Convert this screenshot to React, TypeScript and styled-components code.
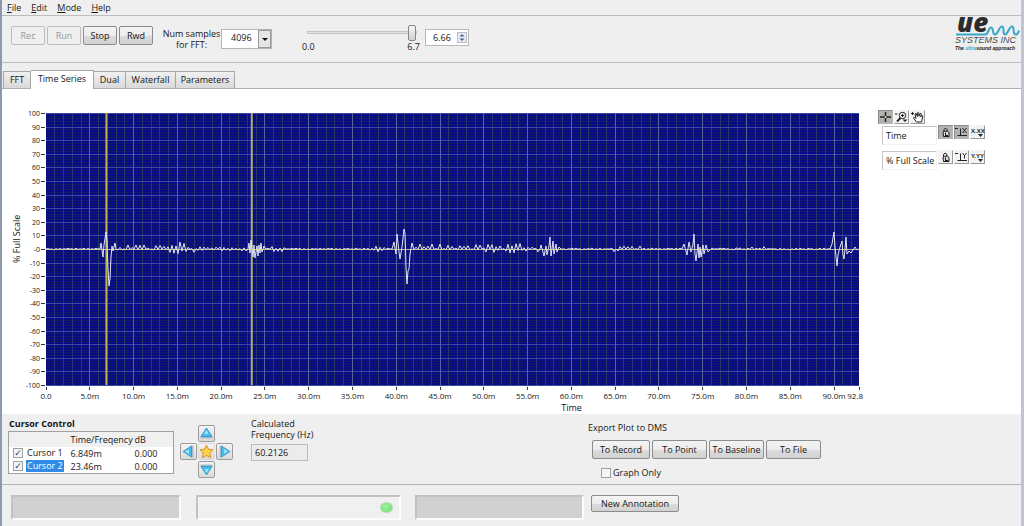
import React, { useState } from "react";
import styled, { createGlobalStyle, css } from "styled-components";

const GlobalStyle = createGlobalStyle`
  *, *::before, *::after { box-sizing: border-box; }
  body {
    margin: 0;
    background: #efefef;
    color: #161616;
    font-family: "Open Sans", "Noto Sans", sans-serif;
    font-size: 9px;
    line-height: 12px;
  }
  button, input, select { font: inherit; color: inherit; margin: 0; }
`;

/* ---------- shared parts ---------- */

const Window = styled.div`
  display: flex;
  flex-direction: column;
  min-height: 100vh;
  background: #efefef;
  border-left: 2px solid #8d9aa8;
  border-right: 3px solid #bcc6d2;
`;

const PushButton = styled.button<{ $width: number; $height?: number }>`
  width: ${(p) => p.$width}px;
  height: ${(p) => p.$height ?? 19}px;
  padding: 0;
  border: 1px solid #8c8c8c;
  border-radius: 2px;
  background: linear-gradient(#f4f4f4, #ececec 50%, #dcdcdc 51%, #d2d2d2);
  line-height: 14px;
  white-space: nowrap;
  &:disabled {
    color: #989898;
    border-color: #bdbdbd;
    background: #efefef;
  }
`;

/* ---------- menu and toolbar ---------- */

const MenuBar = styled.nav`
  display: flex;
  gap: 10px;
  height: 16px;
  padding: 0 5px;
  border-bottom: 1px solid #bdbdbd;
`;

const MenuItem = styled.button`
  padding: 0;
  border: 0;
  background: none;
  line-height: 14px;
`;

const Toolbar = styled.header`
  display: flex;
  align-items: flex-start;
  height: 47px;
  padding: 10px 0 0 9px;
  border-bottom: 1px solid #bdbdbd;
`;

const ButtonRow = styled.div<{ $gap: number }>`
  display: flex;
  gap: ${(p) => p.$gap}px;
`;

const SampleLabel = styled.label`
  display: flex;
  flex-direction: column;
  align-items: center;
  width: 55px;
  margin: 2px 2px 0 11px;
  line-height: 11px;
  white-space: nowrap;
`;

const SelectFrame = styled.div`
  position: relative;
  display: flex;
  width: 51px;
  height: 20px;
  margin-top: 3px;
  border: 1px solid #b4b4b4;
  background: #fff;
`;

const SampleSelect = styled.select`
  flex: 1;
  appearance: none;
  border: 0;
  padding: 0 0 2px 9px;
  background: none;
`;

const SelectArrow = styled.svg`
  position: absolute;
  top: 0;
  right: 0;
  pointer-events: none;
`;

const SliderGroup = styled.div`
  display: flex;
  flex-direction: column;
  width: 118px;
  margin: -3px 0 0 30px;
`;

const Slider = styled.input`
  appearance: none;
  width: 110px;
  height: 18px;
  margin: 0 0 0 5px;
  background: transparent;
  &::-webkit-slider-runnable-track {
    height: 3px;
    border: 1px solid #c4c4c4;
    background: #e2e2e2;
  }
  &::-webkit-slider-thumb {
    appearance: none;
    width: 8px;
    height: 16px;
    margin-top: -7px;
    border: 1px solid #858585;
    border-radius: 2px;
    background: linear-gradient(#f6f6f6, #cfcfcf);
  }
`;

const SliderScale = styled.div`
  display: flex;
  justify-content: space-between;
`;

const NumberFrame = styled.div`
  display: flex;
  align-items: center;
  width: 44px;
  height: 17px;
  margin: 3px 0 0 5px;
  border: 1px solid #b8b8b8;
  background: #fff;
`;

const NumberInput = styled.input`
  width: 31px;
  padding: 0 0 0 7px;
  border: 0;
  background: none;
  line-height: 14px;
`;

const Logo = styled.svg`
  margin: -10px 0 0 auto;
  overflow: visible;
`;

/* ---------- tabs ---------- */

const TabStrip = styled.div`
  display: flex;
  align-items: flex-end;
  height: 26px;
  padding-left: 1px;
  border-bottom: 1px solid #b0b0b0;
`;

const Tab = styled.button<{ $width: number; $active: boolean }>`
  width: ${(p) => p.$width}px;
  height: 17px;
  padding: 0;
  border: 1px solid #a6a6a6;
  border-width: 1px 1px 0 0;
  background: linear-gradient(#f0f0f0, #d9d9d9);
  line-height: 14px;
  &:first-child { border-left-width: 1px; }
  ${(p) =>
    p.$active &&
    css`
      height: 19px;
      margin-bottom: -1px;
      padding-bottom: 3px;
      background: #fff;
    `}
`;

/* ---------- graph page ---------- */

const GraphPage = styled.main`
  display: flex;
  height: 325px;
  padding: 24px 33px 0 9px;
  background: #fff;
`;

const AxisTitle = styled.div`
  width: 12px;
  height: 272px;
  margin-right: 23px;
  padding-top: 20px;
  writing-mode: vertical-rl;
  transform: rotate(180deg);
  line-height: 12px;
  text-align: center;
`;

const Plot = styled.figure`
  flex: 1;
  min-width: 0;
  margin: 0;
`;

const PlotSvg = styled.svg`
  display: block;
  width: 100%;
  height: 272px;
  overflow: visible;
  font-size: 8px;
  fill: #161616;
`;

const TimeTitle = styled.figcaption`
  margin-top: 17px;
  padding-left: 238px;
  text-align: center;
`;

const Legend = styled.aside`
  display: flex;
  flex-direction: column;
  width: 110px;
  margin: -3px 0 0 19px;
`;

const LegendRow = styled.div`
  display: flex;
  gap: 1px;
  height: 19px;
  margin: 0 0 6px 4px;
`;

const PaletteRow = styled.div`
  display: flex;
  gap: 1px;
  height: 15px;
`;

const ScaleName = styled.input`
  width: 55px;
  height: 19px;
  margin-top: 1px;
  padding: 0 0 0 3px;
  border: 1px solid #d8d8d8;
  border-color: #c4c4c4 #f0f0f0 #f0f0f0 #c4c4c4;
  background: #fff;
`;

const IconButton = styled.button<{ $pressed?: boolean }>`
  width: 15px;
  height: 14px;
  padding: 0;
  border: 1px solid;
  border-color: ${(p) => (p.$pressed ? "#8a8a8a #b4b4b4 #b4b4b4 #8a8a8a" : "#f4f4f4 #989898 #989898 #f4f4f4")};
  background: ${(p) => (p.$pressed ? "#b2b2b2" : "#f2f2f2")};
  line-height: 0;
  svg { display: block; overflow: visible; }
`;

/* ---------- cursor and export panel ---------- */

const ControlPanel = styled.section`
  display: flex;
  align-items: flex-start;
  height: 71px;
  padding: 4px 6px 0;
  border-bottom: 1px solid #b4b4b4;
`;

const CursorGroup = styled.div`
  width: 166px;
`;

const GroupTitle = styled.h2`
  margin: 0 0 1px 1px;
  font-size: 9px;
  line-height: 12px;
`;

const CursorTable = styled.table`
  width: 100%;
  table-layout: fixed;
  border-collapse: collapse;
  border: 1px solid #a0a0a0;
  background: #fff;
  th, td {
    height: 13px;
    padding: 0;
    font-weight: normal;
    text-align: left;
    line-height: 13px;
    white-space: nowrap;
  }
  thead { background: #f0f0f0; }
  th { height: 15px; }
  th:first-child { width: 62px; }
  th:nth-child(2) { width: 64px; }
`;

const CursorLabel = styled.label<{ $selected: boolean }>`
  display: flex;
  align-items: center;
  gap: 3px;
  padding-left: 4px;
  span {
    padding: 0 1px;
    line-height: 12px;
    background: ${(p) => (p.$selected ? "#2f8be6" : "none")};
    color: ${(p) => (p.$selected ? "#fff" : "inherit")};
  }
`;

const CheckBox = styled.input`
  appearance: none;
  flex: none;
  width: 10px;
  height: 10px;
  border: 1px solid #a0a0a0;
  background: #f4f4f4;
  &:checked::after {
    content: "✓";
    display: block;
    color: #34466e;
    font: bold 9px/8px "DejaVu Sans", sans-serif;
    text-align: center;
  }
`;

const NavPad = styled.div`
  display: grid;
  grid-template-columns: repeat(3, 17px);
  grid-template-rows: repeat(3, 17px);
  gap: 1px;
  margin: 7px 0 0 6px;
`;

const NavButton = styled.button<{ $area: string; $flat?: boolean }>`
  grid-area: ${(p) => p.$area};
  padding: 0;
  border: 1px solid ${(p) => (p.$flat ? "#dcdcdc" : "#9c9c9c")};
  border-radius: 2px;
  background: linear-gradient(#f4f4f4, #dadada);
  svg { display: block; }
`;

const FrequencyGroup = styled.label`
  display: flex;
  flex-direction: column;
  width: 64px;
  margin: 0 0 0 18px;
  line-height: 11px;
  white-space: nowrap;
`;

const FrequencyInput = styled.input`
  width: 57px;
  height: 17px;
  margin-top: 4px;
  padding: 0 3px;
  border: 1px solid #bcbcbc;
  background: #ececec;
  line-height: 14px;
`;

const ExportGroup = styled.div`
  display: flex;
  flex-direction: column;
  margin: 4px 0 0 273px;
`;

const ExportTitle = styled.div`
  margin-bottom: 6px;
`;

const ExportButtons = styled.div`
  display: flex;
  gap: 2px;
  margin-left: 4px;
`;

const GraphOnly = styled.label`
  display: flex;
  align-items: center;
  gap: 2px;
  margin: 8px 0 0 13px;
`;

/* ---------- status row ---------- */

const StatusBar = styled.footer`
  display: flex;
  align-items: flex-start;
  padding: 10px 9px 6px;
`;

const StatusBox = styled.div<{ $width: number; $gap: number; $filled?: boolean }>`
  display: flex;
  align-items: center;
  justify-content: flex-end;
  width: ${(p) => p.$width}px;
  height: 25px;
  margin-right: ${(p) => p.$gap}px;
  padding-right: 6px;
  border: 2px solid;
  border-color: #c2c2c2 #fcfcfc #fcfcfc #c2c2c2;
  background: ${(p) => (p.$filled ? "#d0d0d0" : "#f0f0f0")};
`;

const Led = styled.i`
  width: 13px;
  height: 11px;
  border: 1px solid #b4dcb0;
  border-radius: 50%;
  background: radial-gradient(circle at 40% 35%, #9cf29a, #6edc70);
`;

/* ---------- signal ---------- */

const PLOT_WIDTH = 813;
const PLOT_HEIGHT = 272;
const TIME_SPAN = 92.85;

type Point = [number, number];

const bursts: Point[][] = [
  [[54, 0], [55, 6], [57, -8], [58, 4], [60, 17], [61, 8], [62, -20], [63, -37], [64, -30], [65, -8], [66, 3], [67, -2], [69, 6], [70, 0]],
  [[202, 0], [203, 6], [204, -4], [205, 9], [207, -8], [208, 4], [209, -9], [211, 3], [212, -7], [213, 4], [214, -4], [215, 6], [216, -3], [218, 3], [220, 0]],
  [[346, 0], [348, 7], [350, -5], [351, 15], [353, -3], [354, -10], [356, 2], [358, 20], [359, 16], [360, -18], [361, -35], [362, -22], [363, -20], [364, -5], [366, 6], [368, -1]],
  [[494, 0], [495, 4], [497, -3], [498, -7], [500, 3], [501, -6], [503, 3], [504, 12], [505, -7], [507, 8], [508, -5], [510, 5], [511, -3], [513, 2], [515, 0]],
  [[636, 0], [638, 5], [641, -6], [643, 7], [645, -3], [647, 5], [648, 15], [649, -5], [650, -12], [652, 5], [653, -9], [654, 2], [655, -8], [657, 4], [658, -5], [660, 4], [662, -3], [665, 0]],
  [[784, 0], [786, 5], [788, 17], [789, 2], [791, -17], [792, -6], [794, 2], [796, 8], [797, -6], [798, -10], [799, 0], [800, 12], [801, -5], [803, -2], [805, -4], [807, -1], [809, 2], [811, -1], [813, 0]],
];

/* [from, to, upward reach, downward reach] of the low-level signal */
const quiet: [number, number, number, number][] = [
  [70, 100, 5, 1], [100, 124, 4, 1], [124, 144, 7, 5], [144, 165, 4, 4],
  [165, 202, 2, 2], [218, 245, 3, 3], [322, 340, 3, 4], [368, 440, 5, 1],
  [440, 475, 6, 4], [475, 494, 2, 3], [568, 576, 6, 4], [576, 596, 3, 1],
  [688, 708, 3, 1], [718, 728, 3, 5],
];

function buildTrace(): string {
  const points: Point[] = [];
  let seed = 11;
  const random = () => {
    seed = (seed * 16807) % 2147483647;
    return seed / 2147483647;
  };
  let up = true;
  for (let x = 0; x < PLOT_WIDTH; x += 2) {
    const value = random();
    up = !up;
    if (bursts.some((b) => x >= b[0][0] && x <= b[b.length - 1][0])) continue;
    const zone = quiet.find((q) => x >= q[0] && x < q[1]);
    const high = zone ? zone[2] : 1;
    const low = zone ? zone[3] : 1;
    points.push([x, up ? value * high : -value * low]);
  }
  return points
    .concat(...bursts)
    .sort((a, b) => a[0] - b[0])
    .map(([x, y]) => `${x},${PLOT_HEIGHT / 2 - y}`)
    .join(" ");
}

const trace = buildTrace();
const percentX = (ms: number) => `${(ms / TIME_SPAN) * 100}%`;
const levelY = (level: number) => Math.round(((100 - level) / 200) * PLOT_HEIGHT);

const minorTimes = Array.from({ length: 92 }, (_, i) => i + 1);
const majorTimes = Array.from({ length: 19 }, (_, i) => i * 5);
const minorLevels = Array.from({ length: 99 }, (_, i) => 98 - i * 2);
const majorLevels = Array.from({ length: 21 }, (_, i) => 100 - i * 10);

function levelText(level: number) {
  return level === 0 ? "-0" : String(level);
}

function TimeSeriesPlot() {
  return (
    <PlotSvg role="img" aria-label="Full scale level over time">
      <rect width="100%" height={PLOT_HEIGHT} fill="#09098a" />
      <g shapeRendering="crispEdges">
        {minorLevels.map((v) => (
          <line key={v} x1="0" x2="100%" y1={levelY(v)} y2={levelY(v)} stroke="#111c60" />
        ))}
        {minorTimes.map((t) => (
          <line key={t} x1={percentX(t)} x2={percentX(t)} y1="0" y2={PLOT_HEIGHT} stroke="#24386c" />
        ))}
        {majorLevels.map((v) => (
          <line key={v} x1="0" x2="100%" y1={levelY(v)} y2={levelY(v)} stroke="#3c4a9c" />
        ))}
        {majorTimes.slice(1).map((t) => (
          <line key={t} x1={percentX(t)} x2={percentX(t)} y1="0" y2={PLOT_HEIGHT} stroke="#53649c" />
        ))}
      </g>
      <line x1={percentX(6.9)} x2={percentX(6.9)} y1="0" y2={PLOT_HEIGHT} stroke="#b4b840" strokeWidth="2" />
      <line x1={percentX(23.5)} x2={percentX(23.5)} y1="0" y2={PLOT_HEIGHT} stroke="#a9b07c" strokeWidth="2" />
      <svg width="100%" height={PLOT_HEIGHT} viewBox={`0 0 ${PLOT_WIDTH} ${PLOT_HEIGHT}`} preserveAspectRatio="none">
        <polyline points={trace} fill="none" stroke="#e2e4fa" vectorEffect="non-scaling-stroke" />
      </svg>
      <line x1="0" x2="100%" y1="136.5" y2="136.5" stroke="#e0e090" strokeOpacity="0.8" />
      {majorLevels.map((v) => (
        <g key={v}>
          <line x1="-5" x2="-1" y1={levelY(v)} y2={levelY(v)} stroke="#333" shapeRendering="crispEdges" />
          <text x="-6" y={levelY(v) + 3} textAnchor="end" fontSize="7">{levelText(v)}</text>
        </g>
      ))}
      {majorTimes.map((t) => (
        <g key={t}>
          <line x1={percentX(t)} x2={percentX(t)} y1="274" y2="277" stroke="#333" shapeRendering="crispEdges" />
          <text x={percentX(t)} y="286" textAnchor="middle">{t === 0 ? "0.0" : `${t}.0m`}</text>
        </g>
      ))}
      <line x1="100%" x2="100%" y1="274" y2="277" stroke="#333" shapeRendering="crispEdges" />
      <text x="100%" dx="4" y="286" textAnchor="end">92.8</text>
    </PlotSvg>
  );
}

/* ---------- icons ---------- */

const CrossIcon = () => (
  <svg width="13" height="12" viewBox="0 0 13 12" stroke="#222" fill="none">
    <path d="M6.5 1v10M1 6h11" strokeWidth="1.5" />
    <path d="M6.5 5v2M5.5 6h2" stroke="#d8e85a" />
  </svg>
);

const MagnifierIcon = () => (
  <svg width="13" height="12" viewBox="0 0 13 12" stroke="#222" fill="none">
    <circle cx="7.5" cy="4.5" r="3.2" />
    <path d="M5.5 7L2 10.5" strokeWidth="1.8" />
    <path d="M6 4.5h3M7.5 3v3M0 3h2.5" />
    <path d="M7.5 8.5h5L10 11z" fill="#222" stroke="none" />
  </svg>
);

const HandIcon = () => (
  <svg width="13" height="12" viewBox="0 0 13 12" stroke="#222" fill="#fff" strokeLinejoin="round">
    <path d="M5.5 11L2.5 7 3.5 6 5 7.5 4 3 5.2 2.6 6.4 5.5 6.4 1.8H7.7L8 5.3 9 2.5l1.2.4L9.8 6l1-1.5 1 .6L10.5 11z" />
    <path d="M0 2.5h3M1.5 1v3" />
  </svg>
);

const LockIcon = ({ open = false }: { open?: boolean }) => (
  <svg width="13" height="12" viewBox="0 0 13 12" stroke="#1c1c1c" fill="none">
    <path d={open ? "M4.5 7V3.5L6 2l2 1.5V5" : "M5 6V3.5L6.500 2 8 3.5V6"} />
    <path d="M4 6l1-.8h3.500l1.500 1.300V10.500H4.500z" fill="#ddd" />
    <path d="M6.500 6.500v2.500M6 9.500h3" />
  </svg>
);

const AutoscaleIcon = ({ axis }: { axis: string }) => (
  <svg width="13" height="12" viewBox="0 0 13 12" stroke="#222" fill="none">
    <path d="M0 2.5h3M5.5 2.5v7M2.500 9.500h9.500" />
    <path d={axis === "X" ? "M7.500 2l4 5M11.500 2l-4 5" : "M7.500 2l2 2.500 2-2.500M9.500 4.500v3"} />
  </svg>
);

const FormatIcon = ({ axis }: { axis: string }) => (
  <svg width="13" height="12" viewBox="0 0 13 12" fill="#222">
    <text x="0" y="7" fontSize="6" fontFamily="Liberation Sans, sans-serif" fontWeight="bold">{`${axis}.${axis}${axis}`}</text>
    <path d="M7 8h5l-2.500 3z" />
  </svg>
);

/* A solid pointer with a lit face and a shaded base. */
const Arrow = ({ turn }: { turn: number }) => (
  <svg width="15" height="15" viewBox="0 0 15 15">
    <g transform={`rotate(${turn} 7.5 7.5)`}>
      <path d="M1.5 10.5h12v2h-12z" fill="#a8bcc8" />
      <path d="M7.5 2L13 10.5H2z" fill="#43bdf0" stroke="#3a9ccc" strokeLinejoin="round" />
      <path d="M7.5 3.8L9.5 8H5z" fill="#9be4ff" />
    </g>
  </svg>
);

const Star = () => (
  <svg width="15" height="15" viewBox="0 0 15 15">
    <path d="M7.5 1l2 4.3 4.5.6-3.3 3.1.9 4.7-4.1-2.3-4.1 2.3.9-4.7L1 5.9l4.500-.6z" fill="#ffd04a" stroke="#d8922a" strokeLinejoin="round" />
  </svg>
);

const CompanyLogo = () => (
  <Logo width="67" height="36" viewBox="0 0 67 36" role="img" aria-label="UE Systems Inc">
    <text x="3" y="16" fontFamily="Open Sans, sans-serif" fontSize="26" fontWeight="800" fontStyle="italic" fill="#2c2c2e">ue</text>
    <path d="M2 18.5h29c4 0 3-7 6-7s1 7 4 7 4-8 7-8 0 8 3 8 4-8 7-8 0 8 4 8c2 0 2-2 3-4" fill="none" stroke="#3aa6cc" strokeWidth="2" />
    <text x="1" y="27" fontFamily="Liberation Sans, sans-serif" fontSize="9" fontStyle="italic" fill="#4a4a4c">SYSTEMS INC</text>
    <text x="1" y="34" fontFamily="Liberation Sans, sans-serif" fontSize="5" fontWeight="bold" fontStyle="italic" fill="#222">
      The <tspan fill="#3aa6cc">ultra</tspan>sound approach
    </text>
  </Logo>
);

/* ---------- page ---------- */

const menus = ["File", "Edit", "Mode", "Help"];

const tabs = [
  { name: "FFT", width: 28 },
  { name: "Time Series", width: 63 },
  { name: "Dual", width: 32 },
  { name: "Waterfall", width: 50 },
  { name: "Parameters", width: 59 },
];

const cursors = [
  { name: "Cursor 1", time: "6.849m", db: "0.000" },
  { name: "Cursor 2", time: "23.46m", db: "0.000" },
];

export default function App() {
  const [tab, setTab] = useState("Time Series");
  const [selected, setSelected] = useState("Cursor 2");

  return (
    <>
      <GlobalStyle />
      <Window>
        <MenuBar>
          {menus.map((m) => (
            <MenuItem key={m}><u>{m[0]}</u>{m.slice(1)}</MenuItem>
          ))}
        </MenuBar>

        <Toolbar>
          <ButtonRow $gap={2}>
            <PushButton $width={34} disabled>Rec</PushButton>
            <PushButton $width={34} disabled>Run</PushButton>
            <PushButton $width={34}>Stop</PushButton>
            <PushButton $width={34}>Rwd</PushButton>
          </ButtonRow>
          <SampleLabel htmlFor="samples">
            <span>Num samples</span>
            <span>for FFT:</span>
          </SampleLabel>
          <SelectFrame>
            <SampleSelect id="samples" defaultValue="4096">
              <option>1024</option>
              <option>2048</option>
              <option>4096</option>
            </SampleSelect>
            <SelectArrow width="13" height="18" viewBox="0 0 13 18">
              <rect x="0.5" y="0.5" width="12" height="17" fill="#e6e6e6" stroke="#9a9a9a" />
              <path d="M4 8h6L7 11z" fill="#111" />
            </SelectArrow>
          </SelectFrame>
          <SliderGroup>
            <Slider type="range" min="0" max="6.7" step="0.01" defaultValue="6.7" aria-label="Time position" />
            <SliderScale><span>0.0</span><span>6.7</span></SliderScale>
          </SliderGroup>
          <NumberFrame>
            <NumberInput defaultValue="6.66" aria-label="Time value" />
            <svg width="10" height="11" viewBox="0 0 10 11">
              <rect x="0.5" y="0.5" width="9" height="10" fill="#e9edf3" stroke="#b4bccb" />
              <path d="M2.5 4.5L5 2l2.5 2.5zM2.5 6.5L5 9l2.5-2.5z" fill="#4c5f8c" />
            </svg>
          </NumberFrame>
          <CompanyLogo />
        </Toolbar>

        <TabStrip role="tablist">
          {tabs.map((t) => (
            <Tab
              key={t.name}
              role="tab"
              aria-selected={tab === t.name}
              $active={tab === t.name}
              $width={t.width}
              onClick={() => setTab(t.name)}
            >
              {t.name}
            </Tab>
          ))}
        </TabStrip>

        <GraphPage>
          <AxisTitle>% Full Scale</AxisTitle>
          <Plot>
            <TimeSeriesPlot />
            <TimeTitle>Time</TimeTitle>
          </Plot>
          <Legend>
            <PaletteRow>
              <IconButton $pressed aria-label="Cursor tool"><CrossIcon /></IconButton>
              <IconButton aria-label="Zoom tool"><MagnifierIcon /></IconButton>
              <IconButton aria-label="Pan tool"><HandIcon /></IconButton>
            </PaletteRow>
            <LegendRow>
              <ScaleName defaultValue="Time" aria-label="X scale name" />
              <IconButton $pressed aria-label="Lock X scale"><LockIcon /></IconButton>
              <IconButton $pressed aria-label="Autoscale X"><AutoscaleIcon axis="X" /></IconButton>
              <IconButton aria-label="X format"><FormatIcon axis="X" /></IconButton>
            </LegendRow>
            <LegendRow>
              <ScaleName defaultValue="% Full Scale" aria-label="Y scale name" />
              <IconButton aria-label="Lock Y scale"><LockIcon open /></IconButton>
              <IconButton aria-label="Autoscale Y"><AutoscaleIcon axis="Y" /></IconButton>
              <IconButton aria-label="Y format"><FormatIcon axis="Y" /></IconButton>
            </LegendRow>
          </Legend>
        </GraphPage>

        <ControlPanel>
          <CursorGroup>
            <GroupTitle>Cursor Control</GroupTitle>
            <CursorTable>
              <thead>
                <tr><th /><th>Time/Freqency</th><th>dB</th></tr>
              </thead>
              <tbody>
                {cursors.map((c) => (
                  <tr key={c.name} onClick={() => setSelected(c.name)}>
                    <td>
                      <CursorLabel $selected={selected === c.name}>
                        <CheckBox type="checkbox" defaultChecked />
                        <span>{c.name}</span>
                      </CursorLabel>
                    </td>
                    <td>{c.time}</td>
                    <td>{c.db}</td>
                  </tr>
                ))}
              </tbody>
            </CursorTable>
          </CursorGroup>
          <NavPad>
            <NavButton $area="1 / 2" aria-label="Move up"><Arrow turn={0} /></NavButton>
            <NavButton $area="2 / 1" aria-label="Move left"><Arrow turn={-90} /></NavButton>
            <NavButton $area="2 / 2" $flat aria-label="Center"><Star /></NavButton>
            <NavButton $area="2 / 3" aria-label="Move right"><Arrow turn={90} /></NavButton>
            <NavButton $area="3 / 2" aria-label="Move down"><Arrow turn={180} /></NavButton>
          </NavPad>
          <FrequencyGroup>
            <span>Calculated</span>
            <span>Frequency (Hz)</span>
            <FrequencyInput readOnly value="60.2126" />
          </FrequencyGroup>
          <ExportGroup>
            <ExportTitle>Export Plot to DMS</ExportTitle>
            <ExportButtons>
              <PushButton $width={58}>To Record</PushButton>
              <PushButton $width={55}>To Point</PushButton>
              <PushButton $width={55}>To Baseline</PushButton>
              <PushButton $width={55}>To File</PushButton>
            </ExportButtons>
            <GraphOnly>
              <CheckBox type="checkbox" />
              Graph Only
            </GraphOnly>
          </ExportGroup>
        </ControlPanel>

        <StatusBar>
          <StatusBox $width={170} $gap={15} $filled />
          <StatusBox $width={205} $gap={14}><Led /></StatusBox>
          <StatusBox $width={169} $gap={7} $filled />
          <PushButton $width={88} $height={17}>New Annotation</PushButton>
        </StatusBar>
      </Window>
    </>
  );
}
